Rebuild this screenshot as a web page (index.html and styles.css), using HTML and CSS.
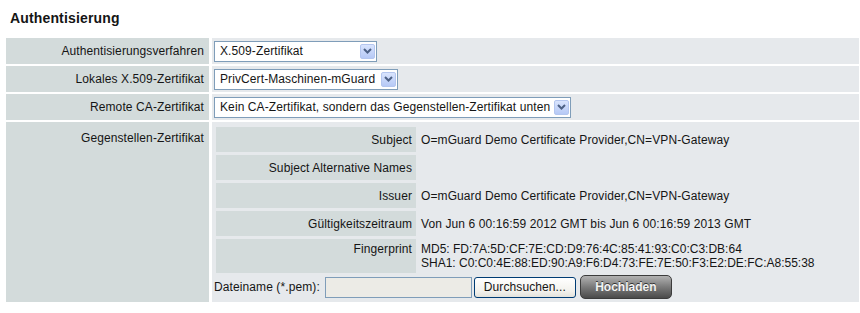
FILE: index.html
```html
<!DOCTYPE html>
<html lang="de">
<head>
  <meta charset="UTF-8" />
  <title>Authentisierung</title>
  <link rel="stylesheet" href="styles.css">
</head>
<body>

  <h1 class="title">Authentisierung</h1>

  <div class="form">
    <!-- row 1 -->
    <div class="lbl">Authentisierungsverfahren</div>
    <div class="val">
      <span class="combo w1">
        <select><option>X.509-Zertifikat</option></select>
        <span class="arrow"><svg width="9" height="6" viewBox="0 0 9 6"><path d="M1 1l3.5 3.5L8 1" fill="none" stroke="#4d6185" stroke-width="2"/></svg></span>
      </span>
    </div>

    <!-- row 2 -->
    <div class="lbl">Lokales X.509-Zertifikat</div>
    <div class="val">
      <span class="combo w2">
        <select><option>PrivCert-Maschinen-mGuard</option></select>
        <span class="arrow"><svg width="9" height="6" viewBox="0 0 9 6"><path d="M1 1l3.5 3.5L8 1" fill="none" stroke="#4d6185" stroke-width="2"/></svg></span>
      </span>
    </div>

    <!-- row 3 -->
    <div class="lbl">Remote CA-Zertifikat</div>
    <div class="val">
      <span class="combo w3">
        <select><option>Kein CA-Zertifikat, sondern das Gegenstellen-Zertifikat unten</option></select>
        <span class="arrow"><svg width="9" height="6" viewBox="0 0 9 6"><path d="M1 1l3.5 3.5L8 1" fill="none" stroke="#4d6185" stroke-width="2"/></svg></span>
      </span>
    </div>

    <!-- row 4: peer certificate -->
    <div class="lbl top">Gegenstellen-Zertifikat</div>
    <div class="val cert">
      <div class="info">
        <div class="ilbl">Subject</div>
        <div class="ival">O=mGuard Demo Certificate Provider,CN=VPN-Gateway</div>

        <div class="ilbl">Subject Alternative Names</div>
        <div class="ival"></div>

        <div class="ilbl">Issuer</div>
        <div class="ival">O=mGuard Demo Certificate Provider,CN=VPN-Gateway</div>

        <div class="ilbl">Gültigkeitszeitraum</div>
        <div class="ival">Von Jun 6 00:16:59 2012 GMT bis Jun 6 00:16:59 2013 GMT</div>

        <div class="ilbl fp">Fingerprint</div>
        <div class="ival fp">MD5: FD:7A:5D:CF:7E:CD:D9:76:4C:85:41:93:C0:C3:DB:64<br>SHA1: C0:C0:4E:88:ED:90:A9:F6:D4:73:FE:7E:50:F3:E2:DE:FC:A8:55:38</div>
      </div>

      <div class="upload">
        <span>Dateiname (*.pem):</span>
        <input class="file-path" type="text">
        <button class="browse">Durchsuchen...</button>
        <button class="send">Hochladen</button>
      </div>
    </div>
  </div>

</body>
</html>
```

FILE: styles.css
```css
:root {
  --label-bg: #d3dbdb;
  --value-bg: #e6e9ec;
  --text: #151515;
  --field-border: #7f9db9;
}
* { box-sizing: border-box; }
body {
  margin: 0;
  background: #fff;
  color: var(--text);
  font-family: "Liberation Sans", Arial, sans-serif;
  font-size: 12px;
  letter-spacing: .1px;
}
.title {
  margin: 10px 0 12px 10px;
  font-size: 14px;
  line-height: 16px;
  font-weight: bold;
  letter-spacing: .15px;
}
/* main form grid */
.form {
  display: grid;
  grid-template-columns: 203px 1fr;
  grid-template-rows: 26px 26px 26px 180px;
  gap: 2px 3px;
  margin: 0 1px 0 6px;
}
.lbl {
  background: var(--label-bg);
  display: flex;
  align-items: center;
  justify-content: flex-end;
  padding-right: 5px;
  white-space: nowrap;
}
.lbl.top {
  align-items: flex-start;
  padding-top: 9px;
}
.val {
  background: var(--value-bg);
  display: flex;
  align-items: center;
  padding-left: 2px;
}
/* XP style combo boxes */
.combo {
  position: relative;
  display: inline-block;
  height: 21px;
}
.combo.w1 { width: 163px; }
.combo.w2 { width: 184px; }
.combo.w3 { width: 357px; }
.combo select {
  appearance: none;
  -webkit-appearance: none;
  width: 100%;
  height: 100%;
  margin: 0;
  border: 1px solid var(--field-border);
  border-radius: 0;
  background: #fff;
  font: inherit;
  letter-spacing: inherit;
  color: var(--text);
  padding: 0 20px 0 5px;
  outline: none;
}
.combo .arrow {
  position: absolute;
  top: 3px;
  bottom: 3px;
  right: 2px;
  width: 15px;
  display: flex;
  align-items: center;
  justify-content: center;
  background: linear-gradient(#d9e4fd, #b6c9f6);
  border: 1px solid #b4c6ef;
  border-radius: 2px;
  pointer-events: none;
}
/* certificate details */
.val.cert {
  flex-direction: column;
  align-items: stretch;
  padding: 5px 4px 3px 4px;
}
.info {
  display: grid;
  grid-template-columns: 200px 1fr;
  grid-template-rows: 25px 25px 25px 25px 34px;
  gap: 3px 2px;
}
.ilbl {
  background: var(--label-bg);
  display: flex;
  align-items: center;
  justify-content: flex-end;
  padding-right: 4px;
  white-space: nowrap;
}
.ival {
  display: flex;
  align-items: center;
  padding-left: 3px;
  white-space: nowrap;
}
.ilbl.fp, .ival.fp {
  display: block;
  line-height: 14px;
  padding-top: 3px;
}
.ilbl.fp { text-align: right; }
.ival.fp { letter-spacing: 0; }
/* upload line */
.upload {
  display: flex;
  align-items: center;
  height: 24px;
  margin: 2px 0 0 -2px;
}
.file-path {
  width: 147px;
  height: 21px;
  margin: 0 0 0 5px;
  border: 1px solid var(--field-border);
  background: #ecebe6;
  padding: 0 3px;
}
.browse {
  width: 102px;
  height: 21px;
  margin-left: 2px;
  border: 1px solid #003c74;
  border-radius: 3px;
  background: linear-gradient(#fff, #f2f1ec 70%, #e3e2dc);
  font: inherit;
  letter-spacing: inherit;
  color: var(--text);
  padding: 0;
}
.send {
  width: 92px;
  height: 24px;
  margin-left: 4px;
  border: 1px solid #3c3c3c;
  border-radius: 5px;
  background: linear-gradient(#b2b2b2, #7a7a7a 50%, #4a4a4a);
  color: #f4f4f4;
  font: bold 12px "Liberation Sans", Arial, sans-serif;
  text-shadow: 0 -1px 0 #333;
  padding: 0;
}
```
